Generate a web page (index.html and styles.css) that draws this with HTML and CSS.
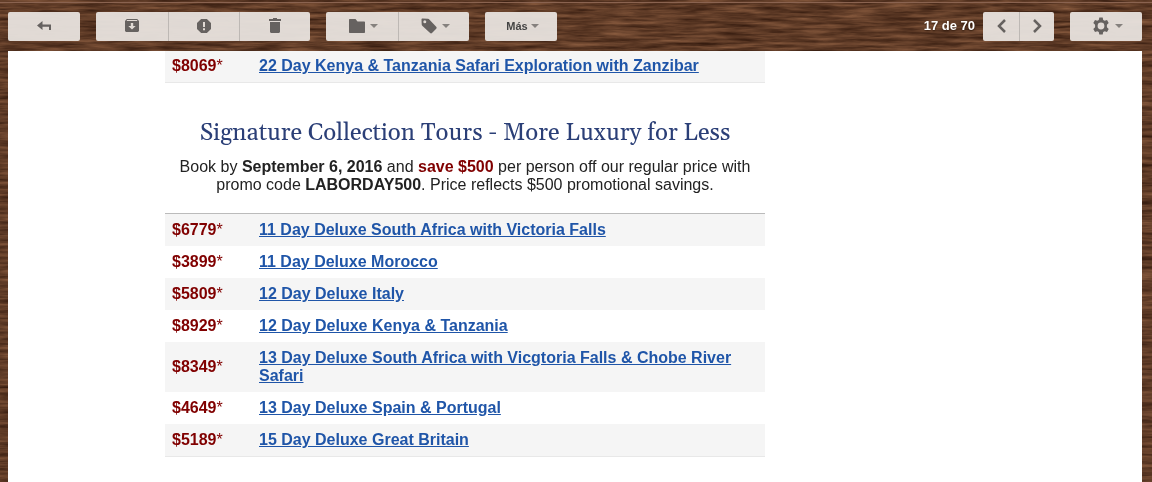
FILE: index.html
```html
<!DOCTYPE html>
<html lang="es">
<head>
<meta charset="utf-8">
<meta name="viewport" content="width=device-width, initial-scale=1.0">
<title>Correo</title>
<link rel="stylesheet" href="styles.css">
</head>
<body>
<!-- wood background -->
<svg class="wood" aria-hidden="true">
	<filter id="grain" x="0" y="0" width="100%" height="100%" color-interpolation-filters="sRGB">
		<feTurbulence type="fractalNoise" baseFrequency="0.025 0.28" numOctaves="4" seed="8"/>
		<feColorMatrix values="0.42 0 0 0 0.16  0.32 0 0 0 0.07  0.24 0 0 0 0.03  0 0 0 0 1"/>
	</filter>
	<rect width="100%" height="100%" filter="url(#grain)"/>
	<rect class="wood_line" y="2" width="100%" height="1"/>
</svg>
<div class="toolbar">
	<div class="group">
		<button type="button" class="btn" aria-label="Volver">
			<svg width="14" height="10" viewBox="0 0 14 10"><path d="M0 4.500 5.500 0v3.500H14V9h-2V5.800H5.500V9z"/></svg>
		</button>
	</div>
	<div class="group">
		<button type="button" class="btn" aria-label="Archivar">
			<svg width="14" height="13" viewBox="0 0 14 13"><path fill-rule="evenodd" d="M1.800 0h10.400L14 2v9.600c0 .8-.6 1.400-1.400 1.400H1.400C.6 13 0 12.400 0 11.600V2zM2.200 1.100l-.7.9h11l-.7-.9zM5.800 4v3H3.300L7 10.500 10.700 7H8.200V4z"/></svg>
		</button>
		<button type="button" class="btn" aria-label="Spam">
			<svg width="14" height="14" viewBox="0 0 14 14"><path fill-rule="evenodd" d="M4.100 0h5.800L14 4.100v5.800L9.900 14H4.100L0 9.900V4.100zM6 3v5h2V3zM6 9.300v2h2v-2z"/></svg>
		</button>
		<button type="button" class="btn" aria-label="Eliminar">
			<svg width="12" height="15" viewBox="0 0 12 15"><path d="M0 1h4V0h4v1h4v2H0zM1 4h10v9.500c0 .9-.6 1.500-1.500 1.500h-7C1.600 15 1 14.400 1 13.500z"/></svg>
		</button>
	</div>
	<div class="group">
		<button type="button" class="btn drop" aria-label="Mover a">
			<svg width="16" height="14" viewBox="0 0 16 14"><path d="M1 0h5.500l2 2.500H15c.6 0 1 .4 1 1V13c0 .6-.4 1-1 1H1c-.6 0-1-.4-1-1V1c0-.6.4-1 1-1z"/></svg>
			<i class="caret"></i>
		</button>
		<button type="button" class="btn drop" aria-label="Etiquetas">
			<svg width="16" height="16" viewBox="0 0 16 16"><path fill-rule="evenodd" d="M1.500.5 7 .8c.5 0 1 .3 1.300.6l6.900 7.400c.6.600.6 1.300 0 1.900l-4.200 4.400c-.6.600-1.300.600-1.900 0L1.500 8C1 7.500.7 7 .7 6.400L.5 1.500c0-.6.4-1 1-1zM3.800 2.300a1.500 1.500 0 1 0 0 3 1.500 1.500 0 0 0 0-3z"/></svg>
			<i class="caret"></i>
		</button>
	</div>
	<div class="group">
		<button type="button" class="btn drop more">Más <i class="caret"></i></button>
	</div>
	<div class="count">17 de 70</div>
	<div class="group pager">
		<button type="button" class="btn" aria-label="Anterior">
			<svg width="9" height="14" viewBox="0 0 9 14"><path class="stroke" d="M8 1 2 7l6 6"/></svg>
		</button>
		<button type="button" class="btn" aria-label="Siguiente">
			<svg width="9" height="14" viewBox="0 0 9 14"><path class="stroke" d="m1 1 6 6-6 6"/></svg>
		</button>
	</div>
	<div class="group">
		<button type="button" class="btn drop" aria-label="Configuración">
			<svg width="18" height="18" viewBox="0 0 18 18"><path fill-rule="evenodd" d="M7.300.5h3.400l.5 2.400 1.500.9L15 3l1.700 3-1.800 1.700v2.600l1.800 1.700-1.700 3-2.300-.8-1.500.9-.5 2.400H7.300l-.5-2.400-1.500-.9L3 15l-1.700-3 1.800-1.700V7.700L1.300 6 3 3l2.300.8 1.500-.9zM9 5.600a3.400 3.400 0 1 0 0 6.800 3.400 3.400 0 0 0 0-6.800z"/></svg>
			<i class="caret"></i>
		</button>
	</div>
</div>
<div class="mail">
	<div class="mail_body">
		<table class="tours cut">
			<tr><td class="price">$8069<span>*</span></td><td><a href="#">22 Day Kenya &amp; Tanzania Safari Exploration with Zanzibar</a></td></tr>
		</table>
		<h2>Signature Collection Tours - More Luxury for Less</h2>
		<p class="promo">Book by <b>September 6, 2016</b> and <b class="save">save $500</b> per person off our regular price with promo code <b>LABORDAY500</b>. Price reflects $500 promotional savings.</p>
		<table class="tours line">
			<tr><td class="price">$6779<span>*</span></td><td><a href="#">11 Day Deluxe South Africa with Victoria Falls</a></td></tr>
			<tr><td class="price">$3899<span>*</span></td><td><a href="#">11 Day Deluxe Morocco</a></td></tr>
			<tr><td class="price">$5809<span>*</span></td><td><a href="#">12 Day Deluxe Italy</a></td></tr>
			<tr><td class="price">$8929<span>*</span></td><td><a href="#">12 Day Deluxe Kenya &amp; Tanzania</a></td></tr>
			<tr><td class="price">$8349<span>*</span></td><td><a href="#">13 Day Deluxe South Africa with Vicgtoria Falls &amp; Chobe River Safari</a></td></tr>
			<tr><td class="price">$4649<span>*</span></td><td><a href="#">13 Day Deluxe Spain &amp; Portugal</a></td></tr>
			<tr><td class="price">$5189<span>*</span></td><td><a href="#">15 Day Deluxe Great Britain</a></td></tr>
		</table>
	</div>
</div>
</body>
</html>
```

FILE: styles.css
```css
*{box-sizing:border-box;}
body{margin:0;min-height:100vh;display:flex;flex-direction:column;background:#593725;font-family:"Liberation Sans",Arial,sans-serif;color:#222;}
.wood{position:fixed;top:0;left:0;width:100%;height:100%;z-index:-1;}
.wood_line{fill:#8a6350;}

.toolbar{display:flex;align-items:center;gap:16px;padding:12px 10px 10px 8px;}
.group{display:flex;border-radius:2px;overflow:hidden;background:rgba(232,227,222,.95);}
.btn{display:flex;align-items:center;justify-content:center;gap:5px;width:71px;height:29px;margin:0;padding:0 0 2px;border:0;background:none;font:bold 11px "Liberation Sans",Arial,sans-serif;color:#444;cursor:pointer;}
.btn:first-child{width:72px;}
.btn + .btn{border-left:1px solid #bdb8b4;}
.btn svg{fill:#666260;}
.btn .stroke{fill:none;stroke:#666260;stroke-width:2.5;}
.drop{padding-left:3px;}
.more{gap:3px;}
.caret{border:4px solid transparent;border-top-color:#85817e;border-bottom:0;}
.count{margin-left:auto;margin-right:-8px;padding-bottom:2px;font-size:13px;font-weight:bold;color:#fff;text-shadow:0 1px 2px #2b1509;}
.pager .btn{width:36px;}
.pager .btn:last-child{width:35px;}

.mail{flex:1;margin:0 10px 0 8px;padding:0 157px 25px;background:#fff;overflow:hidden;}
.mail_body{max-width:600px;}
.mail h2{margin:35px 0 0;font:24px/30px Georgia,Gelasio,"Liberation Serif",serif;color:#2b3f77;text-align:center;}
.promo{margin:10px 0 19px;font-size:16px;line-height:18px;text-align:center;}
.save{color:#800000;}
.tours{width:100%;border-collapse:separate;border-spacing:0;border-bottom:1px solid #e8e8e8;font-size:16px;line-height:18px;font-weight:bold;}
.tours td{padding:7px;vertical-align:middle;}
.tours tr:nth-child(odd){background:#f5f5f5;}
.tours .price{width:87px;color:#800000;}
.price span{font-weight:normal;}
.tours a{color:#1f55a8;}
.line{border-top:1px solid #bbb;}
.cut{margin-top:-1px;}
```
